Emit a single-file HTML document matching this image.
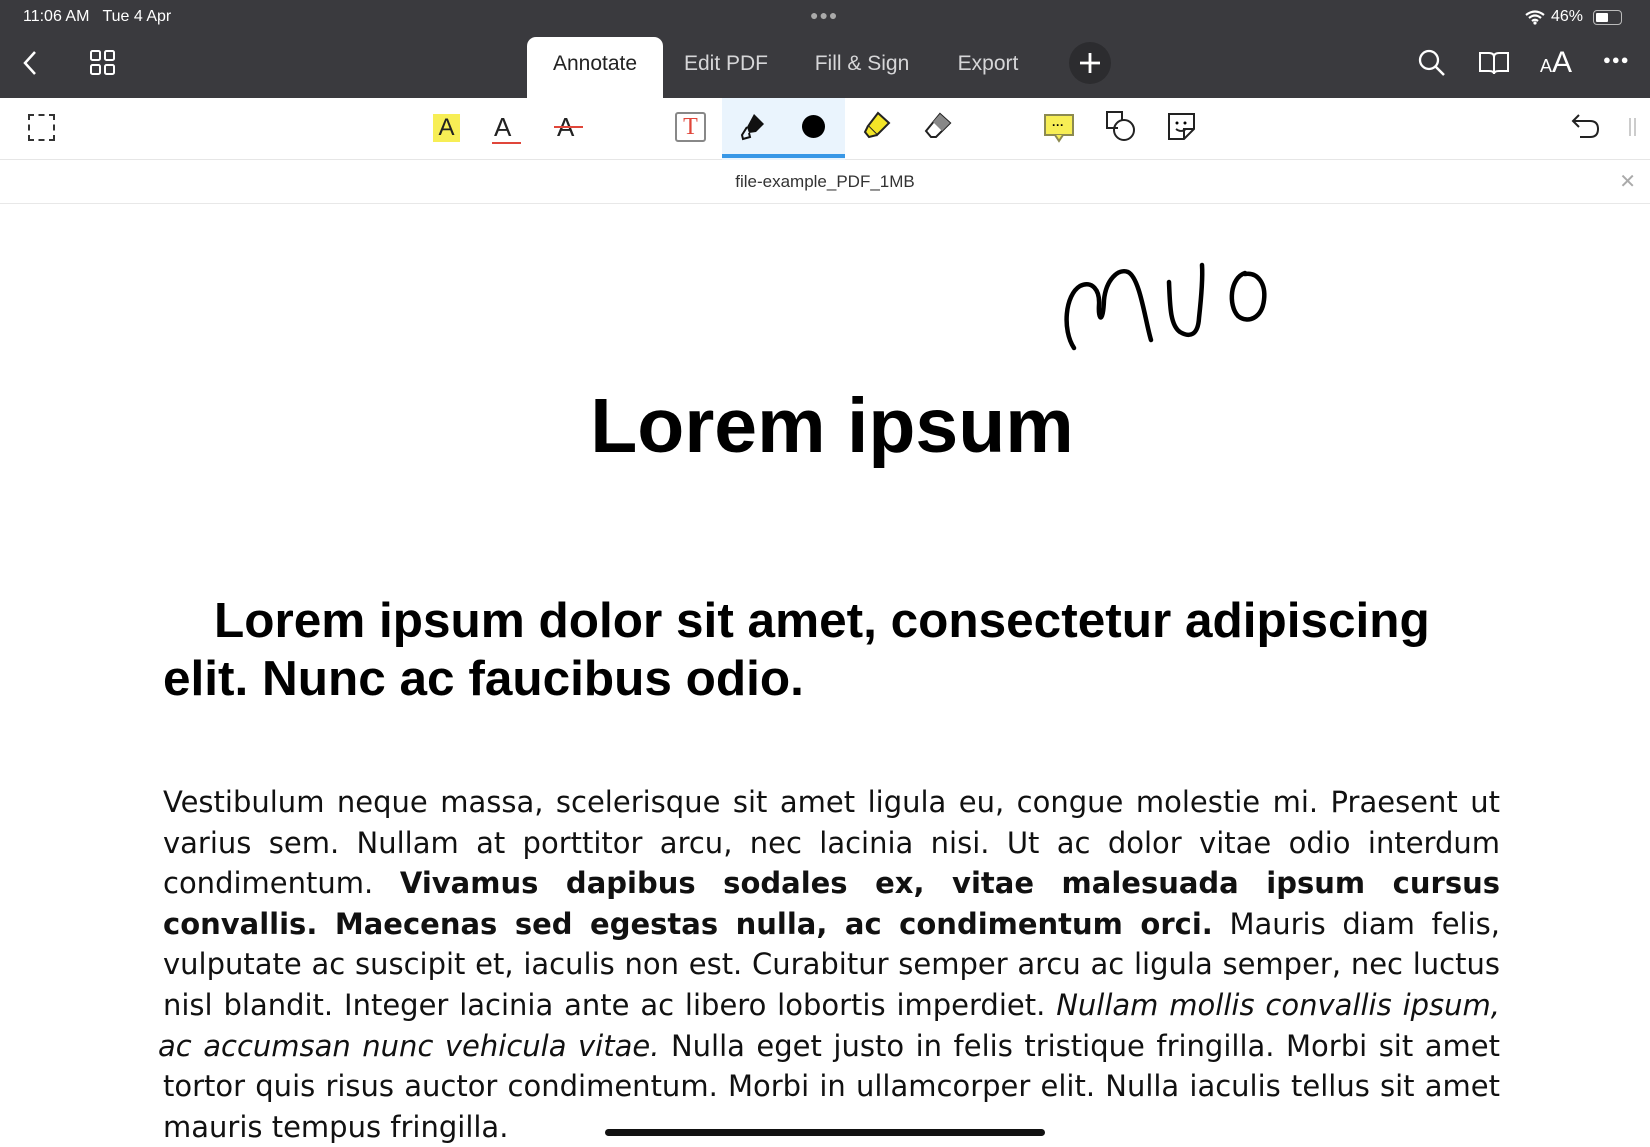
<!DOCTYPE html>
<html><head><meta charset="utf-8"><style>
*{margin:0;padding:0;box-sizing:border-box}
body{width:1650px;height:1147px;overflow:hidden;background:#fff;font-family:"Liberation Sans",sans-serif;position:relative}
.top{position:absolute;left:0;top:0;width:1650px;height:98px;background:#3a3a3e;color:#fff}
.abs{position:absolute}
.tab{position:absolute;top:37px;height:61px;font-size:21px;color:#d6d6d8;line-height:54px;text-align:center}
.tb{position:absolute;top:98px;left:0;width:1650px;height:62px;background:#fff;border-bottom:1px solid #e6e6e6}
.fn{position:absolute;top:160px;left:0;width:1650px;height:44px;background:#fff;border-bottom:1px solid #e8e8e8;font-size:17px;color:#333;text-align:center;line-height:44px}
.body{position:absolute;left:163px;top:782px;width:1337px;font-family:"DejaVu Sans",sans-serif;font-size:29px;line-height:40.6px;color:#111}
.body div{text-align:justify;text-align-last:justify;white-space:nowrap}
.body div.l{text-align-last:left}
</style></head><body>
<div class="top">
 <div class="abs" style="left:23px;top:8px;font-size:16px">11:06 AM&nbsp;&nbsp; Tue 4 Apr</div>
 <div class="abs" style="left:810px;top:7px;font-size:14px;letter-spacing:1px;color:#aaa">●●●</div>
 <svg class="abs" style="left:1525px;top:10px" width="20" height="15" viewBox="0 0 20 15"><path d="M1 5 Q10 -2 19 5 M4 8 Q10 3 16 8 M7 11 Q10 8.5 13 11" stroke="#fff" stroke-width="2.2" fill="none"/><circle cx="10" cy="13" r="1.6" fill="#fff"/></svg>
 <div class="abs" style="left:1551px;top:8px;font-size:16px">46%</div>
 <div class="abs" style="left:1593px;top:10px;width:29px;height:15px;border:1.5px solid #bbb;border-radius:4px"><div style="margin:1.5px;width:12px;height:9px;background:#fff;border-radius:1px"></div></div>
 <svg class="abs" style="left:22px;top:50px" width="18" height="26"><path d="M13 2 L3 13 L13 24" stroke="#fff" stroke-width="2.5" fill="none"/></svg>
 <svg class="abs" style="left:89px;top:49px" width="28" height="28"><g stroke="#fff" stroke-width="2" fill="none"><rect x="2" y="2" width="9" height="9" rx="1.5"/><rect x="16" y="2" width="9" height="9" rx="1.5"/><rect x="2" y="16" width="9" height="9" rx="1.5"/><rect x="16" y="16" width="9" height="9" rx="1.5"/></g></svg>
 <div class="tab" style="left:527px;width:136px;background:#fff;color:#222;border-radius:9px 9px 0 0;height:62px">Annotate</div>
 <div class="tab" style="left:676px;width:100px">Edit PDF</div>
 <div class="tab" style="left:805px;width:114px">Fill &amp; Sign</div>
 <div class="tab" style="left:948px;width:80px">Export</div>
 <div class="abs" style="left:1069px;top:42px;width:42px;height:42px;border-radius:50%;background:#2c2c2f"><svg width="42" height="42"><path d="M21 11V31M11 21H31" stroke="#fff" stroke-width="2.8"/></svg></div>
 <svg class="abs" style="left:1417px;top:48px" width="30" height="30"><circle cx="12" cy="12" r="9" stroke="#fff" stroke-width="2.3" fill="none"/><path d="M18.5 18.5L27 27" stroke="#fff" stroke-width="2.5"/></svg>
 <svg class="abs" style="left:1478px;top:50px" width="32" height="26"><path d="M2 3H11Q16 3 16 7V24Q16 21 11 21H2Z M30 3H21Q16 3 16 7V24Q16 21 21 21H30Z" stroke="#fff" stroke-width="2" fill="none"/></svg>
 <div class="abs" style="left:1540px;top:46px;font-size:30px"><span style="font-size:18px">A</span>A</div>
 <div class="abs" style="left:1603px;top:52px;font-size:13px;letter-spacing:1px">●●●</div>
</div>
<div class="tb">
 <div class="abs" style="left:722px;top:0;width:123px;height:62px;background:#eaf4fd"></div>
 <div class="abs" style="left:722px;top:56px;width:123px;height:4px;background:#3897e6"></div>
 <div class="abs" style="left:28px;top:16px;width:27px;height:27px;border:2px dashed #333"></div>
 <div class="abs" style="left:433px;top:16px;width:27px;height:28px;background:#f7ee55;font-size:24px;text-align:center;line-height:28px;color:#222">A</div>
 <div class="abs" style="left:494px;top:14px;font-size:26px;color:#222">A</div><div class="abs" style="left:492px;top:44px;width:29px;height:2px;background:#e0463a"></div>
 <div class="abs" style="left:557px;top:14px;font-size:26px;color:#222">A</div><div class="abs" style="left:554px;top:28px;width:29px;height:2px;background:#e0463a"></div>
 <div class="abs" style="left:675px;top:14px;width:31px;height:30px;border:2px solid #888;border-radius:3px;color:#e0463a;font-family:'Liberation Serif',serif;font-size:24px;text-align:center;line-height:26px">T</div>
 <svg class="abs" style="left:738px;top:13px" width="30" height="32"><path d="M16 3L26 13L18 21L11 22L9 16Z" fill="#111"/><path d="M9 16L4 24L5 28L12 26L11 22" fill="none" stroke="#111" stroke-width="2"/></svg>
 <div class="abs" style="left:802px;top:17px;width:23px;height:23px;border-radius:50%;background:#000"></div>
 <svg class="abs" style="left:862px;top:12px" width="32" height="32"><path d="M16 3L27 13L15 25L6 16Z" fill="#f3e527" stroke="#222" stroke-width="2"/><path d="M6 16L3 22L7 27L15 25" fill="#f3e527" stroke="#222" stroke-width="2"/></svg>
 <svg class="abs" style="left:922px;top:13px" width="32" height="32"><path d="M18 3L28 12L14 26H9L4 20Z" fill="#fff" stroke="#222" stroke-width="2"/><path d="M18 3L28 12L20 20L11 11Z" fill="#888"/></svg>
 <svg class="abs" style="left:1043px;top:14px" width="32" height="32"><rect x="2" y="3" width="28" height="20" fill="#f7ee55" stroke="#8c8a50" stroke-width="2"/><path d="M12 23L16 29L20 23" fill="#f7ee55" stroke="#8c8a50" stroke-width="2"/><text x="9" y="17" font-size="12" font-weight="bold">···</text></svg>
 <svg class="abs" style="left:1104px;top:12px" width="34" height="34"><path d="M14 18H3V2H18V11" fill="none" stroke="#222" stroke-width="2"/><circle cx="20" cy="20" r="10" fill="none" stroke="#222" stroke-width="2"/></svg>
 <svg class="abs" style="left:1166px;top:13px" width="32" height="32"><path d="M3 3H28V18L18 28H3Z M28 18H18V28" fill="none" stroke="#222" stroke-width="2"/><circle cx="11" cy="12" r="1.5"/><circle cx="19" cy="12" r="1.5"/><path d="M10 18Q15 22 20 18" fill="none" stroke="#222" stroke-width="1.8"/></svg>
 <svg class="abs" style="left:1570px;top:14px" width="32" height="30"><path d="M9 3L3 9L9 15M3 9H20Q28 9 28 17Q28 25 20 25H10" fill="none" stroke="#222" stroke-width="2"/></svg>
 <div class="abs" style="left:1629px;top:20px;width:2px;height:18px;background:#ccc"></div><div class="abs" style="left:1634px;top:20px;width:2px;height:18px;background:#ccc"></div>
</div>
<div class="fn">file-example_PDF_1MB<span style="position:absolute;right:14px;top:0;color:#aaa;font-size:20px">✕</span></div>
<svg class="abs" style="left:0;top:0" width="1650" height="400"><g fill="none" stroke="#000" stroke-width="4.5" stroke-linecap="round"><path d="M1074 348C1062 330 1065 295 1080 286C1092 280 1100 290 1099 305C1098 320 1103 325 1104 300C1106 280 1118 268 1128 272C1140 278 1145 320 1151 340"/><path d="M1169 282C1170 305 1170 325 1180 332C1190 338 1198 335 1199 318C1201 300 1203 280 1202 265"/><path d="M1245 273C1230 278 1228 305 1238 316C1248 324 1262 318 1264 300C1266 284 1258 272 1245 274"/></g></svg>
<div class="abs" style="left:7px;width:1650px;top:382px;text-align:center;font-size:77px;font-weight:bold;color:#000">Lorem ipsum</div>
<div class="abs" style="left:163px;top:592px;width:1290px;font-size:49.5px;font-weight:bold;line-height:58px;text-indent:51px;color:#000">Lorem ipsum dolor sit amet, consectetur adipiscing elit. Nunc ac faucibus odio.</div>
<div class="body">
<div>Vestibulum neque massa, scelerisque sit amet ligula eu, congue molestie mi. Praesent ut</div>
<div>varius sem. Nullam at porttitor arcu, nec lacinia nisi. Ut ac dolor vitae odio interdum</div>
<div>condimentum. <b>Vivamus dapibus sodales ex, vitae malesuada ipsum cursus</b></div>
<div><b>convallis. Maecenas sed egestas nulla, ac condimentum orci.</b> Mauris diam felis,</div>
<div>vulputate ac suscipit et, iaculis non est. Curabitur semper arcu ac ligula semper, nec luctus</div>
<div>nisl blandit. Integer lacinia ante ac libero lobortis imperdiet. <i>Nullam mollis convallis ipsum,</i></div>
<div style="margin-left:-5px"><i>ac accumsan nunc vehicula vitae.</i> Nulla eget justo in felis tristique fringilla. Morbi sit amet</div>
<div>tortor quis risus auctor condimentum. Morbi in ullamcorper elit. Nulla iaculis tellus sit amet</div>
<div class="l">mauris tempus fringilla.</div>
</div>
<div class="abs" style="left:605px;top:1129px;width:440px;height:7px;border-radius:4px;background:#111"></div>
</body></html>
